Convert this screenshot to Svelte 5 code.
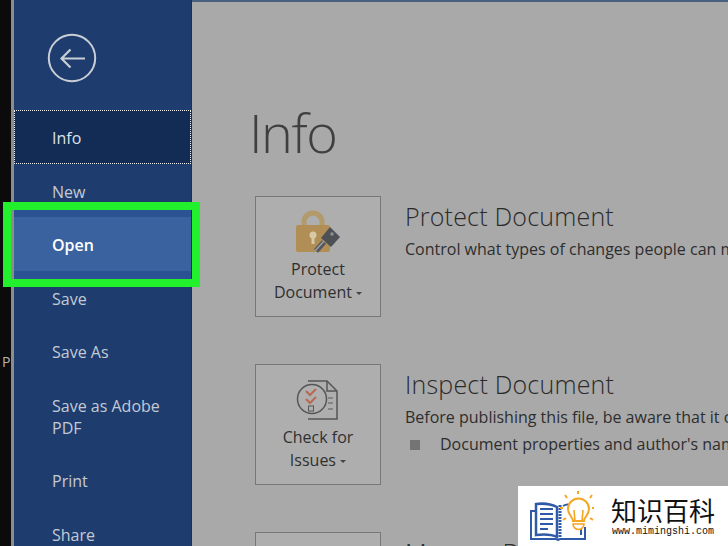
<script lang="ts">
  type NavItem = { label: string; state?: string };

  const navItems: NavItem[] = [
    { label: 'Info', state: 'current' },
    { label: 'New' },
    { label: 'Open', state: 'hover' },
    { label: 'Save' },
    { label: 'Save As' },
    { label: 'Save as Adobe PDF' },
    { label: 'Print' },
    { label: 'Share' }
  ];
</script>

<div class="screen">
  <div class="edge"><span class="edge-letter">P</span></div>

  <nav class="sidebar">
    <button class="back" aria-label="Back">
      <svg width="50" height="50" viewBox="0 0 50 50" fill="none" stroke="#c9ced6" stroke-width="2">
        <circle cx="25" cy="25" r="23.2" />
        <path d="M38 25.5H15M23.5 16.5l-9 9 9 9" stroke-width="2.2" />
      </svg>
    </button>
    <ul>
      {#each navItems as item}
        <li class="nav-item {item.state ?? ''}">{item.label}</li>
      {/each}
    </ul>
  </nav>

  <main class="content">
    <h1>Info</h1>

    <section class="row">
      <div class="tile">
        <svg width="48" height="44" viewBox="0 0 48 44">
          <path d="M10 16v-4a9 9 0 0 1 18 0v4" fill="none" stroke="#b39a6b" stroke-width="5" />
          <rect x="2" y="15" width="34" height="27" rx="2" fill="#b08e55" />
          <circle cx="19" cy="25" r="3.500" fill="#d8c8a8" />
          <rect x="17.500" y="26" width="3" height="8" fill="#d8c8a8" />
          <path d="M30 32l-8 9" stroke="#55585c" stroke-width="5.500" />
          <path d="M36 17l10 10-9 10-10-9z" fill="#4d5054" />
          <circle cx="38" cy="24" r="1.800" fill="#8d8f92" />
          <path d="M21 41l9-10" stroke="#a3a5a8" stroke-width="1.200" />
        </svg>
        <span class="tile-label">Protect<br />Document <i class="caret"></i></span>
      </div>
      <div class="text">
        <h2>Protect Document</h2>
        <p>Control what types of changes people can make to this document.</p>
      </div>
    </section>

    <section class="row">
      <div class="tile">
        <svg width="44" height="44" viewBox="0 0 44 44" fill="none">
          <path d="M12 3h19l10 10v28H12" stroke="#565656" stroke-width="1.500" />
          <path d="M31 3v10h10" stroke="#565656" stroke-width="1.500" />
          <path d="M32 20h5M32 25h5M32 31h5" stroke="#777" stroke-width="1.500" />
          <circle cx="16" cy="21" r="14.500" fill="#b0b0b0" stroke="#555" stroke-width="1.500" />
          <path d="M10 13l4 4 6-6M10 21l4 4 6-6" stroke="#b8694f" stroke-width="2" />
          <rect x="12.500" y="28" width="5" height="5" stroke="#555" />
        </svg>
        <span class="tile-label">Check for<br />Issues <i class="caret"></i></span>
      </div>
      <div class="text">
        <h2>Inspect Document</h2>
        <p>Before publishing this file, be aware that it contains:</p>
        <p class="bullet"><i></i>Document properties and author's name</p>
      </div>
    </section>

    <section class="row">
      <div class="tile"></div>
      <div class="text"><h2>Manage Document</h2></div>
    </section>
  </main>

  <div class="highlight"></div>

  <div class="logo">
    <svg width="66" height="50" viewBox="0 0 66 50" fill="none">
      <path d="M6 20H2v28h25l2 1 2-1h25V36" stroke="#2f5aa8" stroke-width="2" />
      <path d="M7 44V13c8-1 15 0 21 3v30c-6-3-13-3-21-2z" fill="#fff" stroke="#2f5aa8" stroke-width="2.500" />
      <path d="M11 18h13M11 23h13M11 28h13M11 33h13M11 38h8" stroke="#2f5aa8" stroke-width="2.200" />
      <path d="M31 14v32" stroke="#2f5aa8" stroke-width="3" stroke-dasharray="2 1" />
      <path d="M34 15c3-2 5-2 7-1M52 38v6" stroke="#2f5aa8" stroke-width="2" />
      <path d="M44 30c0-4-5-6-5-12a10.500 10.500 0 0 1 21 0c0 6-5 8-5 12z" fill="#fff" stroke="#f5a623" stroke-width="2" />
      <path d="M44 33h11a5.500 5.500 0 0 1-11 0zM46 30l-1-11M53 30l1-11" stroke="#f5a623" stroke-width="1.600" />
      <path d="M49 0v3M36 4l2 3M63 4l-2 3M31 17h3M65 17h-2M34 29l3-2M64 29l-3-2" stroke="#f5a623" stroke-width="2" />
    </svg>
    <div class="logo-text">
      <strong>知识百科</strong>
      <small>www.mimingshi.com</small>
    </div>
  </div>
</div>

<style>
  :global(body) {
    margin: 0;
    background: #0b0b0b;
  }

  .screen {
    width: 728px;
    height: 546px;
    display: flex;
    position: relative;
    overflow: hidden;
    font-family: 'Open Sans', 'Noto Sans', sans-serif;
  }

  .edge {
    width: 11px;
    flex: none;
    background: #0b0b0b;
    border-right: 3px solid #8d8d8d;
    position: relative;
  }

  .edge-letter {
    position: absolute;
    left: 2px;
    top: 352px;
    font-size: 14px;
    color: #b5b5b5;
  }

  .sidebar {
    width: 177px;
    flex: none;
    background: #1e3d6e;
    border-right: 1px solid #173056;
    padding-top: 33px;
    box-sizing: content-box;
  }

  .back {
    display: block;
    margin-left: 33px;
    padding: 0;
    width: 50px;
    height: 50px;
    background: none;
    border: 0;
  }

  ul {
    list-style: none;
    margin: 27px 0 0;
    padding: 0;
  }

  .nav-item {
    box-sizing: border-box;
    padding: 17px 20px 0 38px;
    height: 53.600px;
    font-size: 16px;
    line-height: 22px;
    color: #c4cad4;
  }

  .nav-item:nth-child(6) {
    height: 75.500px;
  }

  .nav-item:nth-child(7) {
    height: 54px;
  }

  .nav-item.current {
    background: #122c55;
    color: #dde2ea;
    outline: 1px dotted #f2f2f2;
    outline-offset: -1px;
  }

  .nav-item.hover {
    background: #3a629f;
    box-shadow: 0 -7px 0 #2b5292, 0 9px 0 #2b5292;
    color: #fff;
    font-weight: 600;
  }

  .content {
    flex: 1;
    min-width: 0;
    background: #a9a9a9;
    border-top: 2px solid #49617f;
    padding: 0 0 0 57px;
    color: #2c2c2c;
    white-space: nowrap;
    overflow: hidden;
  }

  h1 {
    margin: 97px 0 31px;
    font-size: 54px;
    font-weight: 300;
    line-height: 66px;
    letter-spacing: -1.500px;
    color: #3f3f3f;
  }

  .row {
    display: flex;
    gap: 24px;
    margin-left: 6px;
    height: 168px;
  }

  .tile {
    box-sizing: border-box;
    flex: none;
    width: 126px;
    height: 121px;
    background: #aeaeae;
    border: 1px solid #777;
    display: flex;
    flex-direction: column;
    align-items: center;
    padding-top: 13px;
  }

  .tile svg {
    height: 44px;
    flex: none;
  }

  .tile-label {
    margin-top: 4px;
    text-align: center;
    font-size: 16px;
    line-height: 22.500px;
    color: #303030;
  }

  .caret {
    display: inline-block;
    border: 3px solid transparent;
    border-top: 3px solid #444;
    border-bottom: 0;
    vertical-align: 3px;
  }

  .text {
    min-width: 0;
  }

  h2 {
    margin: 1px 0 0;
    font-size: 25px;
    font-weight: 300;
    line-height: 38px;
    letter-spacing: 0.200px;
    color: #2b2b2b;
  }

  p {
    margin: 1px 0 0;
    font-size: 16px;
    line-height: 27px;
    color: #2e2e2e;
  }

  p.bullet {
    margin-top: 0;
  }

  .bullet i {
    display: inline-block;
    width: 10px;
    height: 10px;
    margin: 0 20px 0 5px;
    background: #747474;
  }

  .highlight {
    position: absolute;
    left: 3px;
    top: 202px;
    width: 197px;
    height: 85px;
    box-sizing: border-box;
    border: 8px solid #22f02c;
  }

  .logo {
    position: absolute;
    right: 0;
    bottom: 0;
    width: 210px;
    height: 60px;
    background: #fff;
    display: flex;
    align-items: center;
    gap: 16px;
    padding-left: 11px;
    box-sizing: border-box;
  }

  .logo svg {
    flex: none;
  }

  .logo-text {
    display: flex;
    flex-direction: column;
    align-items: center;
    gap: 1px;
    padding-top: 2px;
    color: #111;
  }

  .logo-text strong {
    font-family: 'Noto Sans CJK SC', sans-serif;
    font-weight: 400;
    font-size: 26px;
    line-height: 28px;
  }

  .logo-text small {
    font-family: 'Liberation Mono', monospace;
    font-size: 10px;
    line-height: 14px;
  }
</style>
